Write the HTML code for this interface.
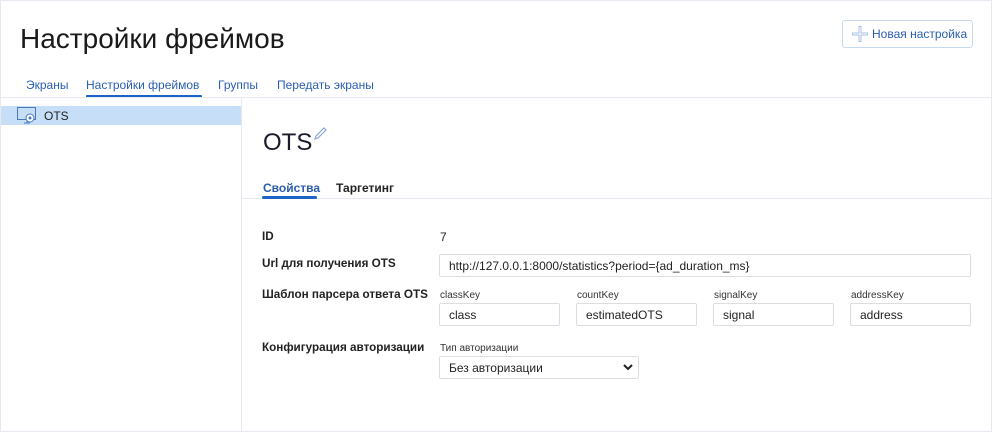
<!DOCTYPE html>
<html><head><meta charset="utf-8"><style>
*{margin:0;padding:0;box-sizing:border-box}
body{width:992px;height:432px;background:#fff;font-family:"Liberation Sans","DejaVu Sans",sans-serif;color:#222;position:relative;overflow:hidden}
.a{position:absolute;white-space:nowrap}
.frame{position:absolute;left:0;top:0;width:992px;height:432px;border:1px solid #e6eaf0}
.tab{font-size:12px;color:#2a5db0;top:78px}
.lbl{font-size:11.7px;font-weight:bold;color:#222;left:262px}
.sm{font-size:10px;color:#333}
.inp{position:absolute;height:23px;border:1px solid #dadde2;border-radius:2px;font-size:12px;padding:4px 9px;color:#222;white-space:nowrap}
</style></head><body>
<div class="frame"></div>
<div class="a" style="left:20px;top:23px;font-size:28px;color:#1a1a1a">Настройки фреймов</div>
<div class="a" style="left:842px;top:20px;width:131px;height:28px;border:1px solid #c7d9f1;border-radius:3px"></div>
<svg class="a" style="left:850px;top:24px" width="20" height="20"><path d="M10 2v16M2 10h16" stroke="#a9c2e6" stroke-width="3"/><path d="M10 3v14M3 10h14" stroke="#fff" stroke-width="1"/></svg>
<div class="a" style="left:872px;top:27px;font-size:12px;color:#2a5db0">Новая настройка</div>
<div class="a tab" style="left:26px">Экраны</div>
<div class="a tab" style="left:86px">Настройки фреймов</div>
<div class="a" style="left:86px;top:95px;width:116px;height:3px;background:#1c64c8;border-radius:1px"></div>
<div class="a tab" style="left:218px">Группы</div>
<div class="a tab" style="left:277px">Передать экраны</div>
<div class="a" style="left:0;top:97px;width:992px;height:1px;background:#e6eaf0"></div>
<div class="a" style="left:241px;top:98px;width:1px;height:334px;background:#e6eaf0"></div>
<div class="a" style="left:1px;top:106px;width:240px;height:19px;background:#c7def8"></div>
<svg class="a" style="left:16px;top:106px" width="22" height="20"><rect x="1.5" y="1.5" width="18" height="12" fill="none" stroke="#4a78b8"/><path d="M8 17h6M11 14v3" stroke="#4a78b8"/><circle cx="14" cy="12" r="4" fill="#fff" stroke="#4a78b8"/><circle cx="14" cy="12" r="1.5" fill="#4a78b8"/></svg>
<div class="a" style="left:44px;top:109px;font-size:12px;color:#222">OTS</div>
<div class="a" style="left:263px;top:129px;font-size:24px;color:#1a1a2a">OTS</div>
<svg class="a" style="left:312px;top:126px" width="16" height="16"><path d="M3 13l1-3 8-8 2 2-8 8z" fill="none" stroke="#8aa8d6" stroke-width="1.2"/></svg>
<div class="a" style="left:263px;top:181px;font-size:12px;font-weight:bold;color:#2a5db0">Свойства</div>
<div class="a" style="left:336px;top:181px;font-size:12px;font-weight:bold;color:#222">Таргетинг</div>
<div class="a" style="left:242px;top:198px;width:750px;height:1px;background:#e6eaf0"></div>
<div class="a" style="left:262px;top:196px;width:55px;height:3px;background:#1c64c8;border-radius:2px"></div>
<div class="a lbl" style="top:230px">ID</div>
<div class="a" style="left:440px;top:230px;font-size:12px">7</div>
<div class="a lbl" style="top:257px">Url для получения OTS</div>
<div class="inp" style="left:439px;top:254px;width:532px">http://127.0.0.1:8000/statistics?period={ad_duration_ms}</div>
<div class="a lbl" style="top:288px">Шаблон парсера ответа OTS</div>
<div class="a sm" style="left:440px;top:290px">classKey</div>
<div class="a sm" style="left:577px;top:290px">countKey</div>
<div class="a sm" style="left:714px;top:290px">signalKey</div>
<div class="a sm" style="left:851px;top:290px">addressKey</div>
<div class="inp" style="left:439px;top:303px;width:121px">class</div>
<div class="inp" style="left:576px;top:303px;width:121px">estimatedOTS</div>
<div class="inp" style="left:713px;top:303px;width:121px">signal</div>
<div class="inp" style="left:850px;top:303px;width:121px">address</div>
<div class="a lbl" style="top:341px">Конфигурация авторизации</div>
<div class="a sm" style="left:440px;top:343px">Тип авторизации</div>
<div class="inp" style="left:439px;top:356px;width:200px">Без авторизации</div>
<svg class="a" style="left:623px;top:362px" width="10" height="10"><path d="M1 3l4 4 4-4" fill="none" stroke="#222" stroke-width="2"/></svg>
</body></html>
